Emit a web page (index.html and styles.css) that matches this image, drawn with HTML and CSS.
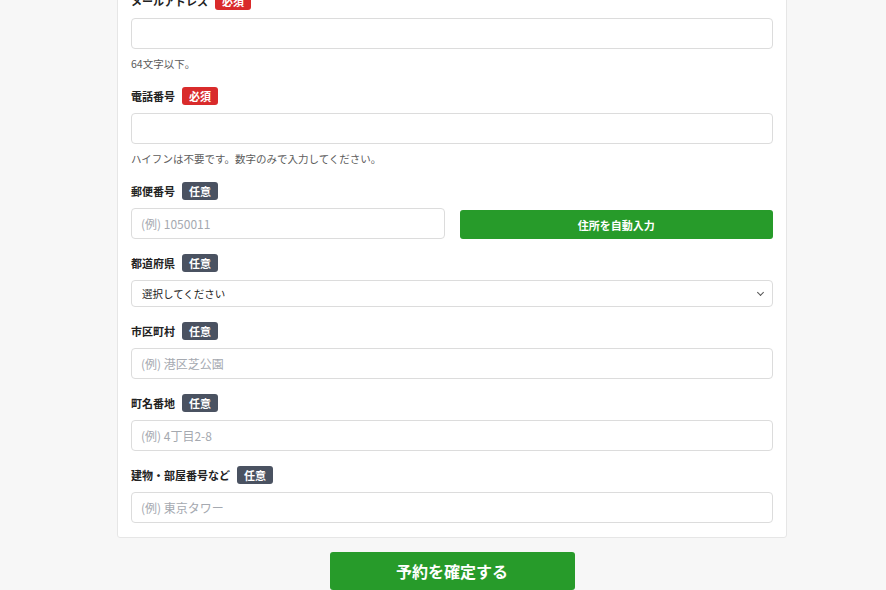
FILE: index.html
```html
<!DOCTYPE html>
<html lang="ja">
<head>
    <meta charset="utf-8">
    <title>予約フォーム</title>
    <link rel="stylesheet" href="styles.css">
</head>
<body>
<div class="page">
    <div class="card">
        <div class="form-group">
            <div class="label-row"><label for="email">メールアドレス</label><span class="badge required">必須</span></div>
            <input type="text" id="email">
            <div class="help">64文字以下。</div>
        </div>

        <div class="form-group">
            <div class="label-row"><label for="tel">電話番号</label><span class="badge required">必須</span></div>
            <input type="text" id="tel">
            <div class="help">ハイフンは不要です。数字のみで入力してください。</div>
        </div>

        <div class="form-group">
            <div class="label-row"><label for="zip">郵便番号</label><span class="badge optional">任意</span></div>
            <div class="zip-row">
                <input type="text" id="zip" placeholder="(例) 1050011">
                <button class="zip-button" type="button">住所を自動入力</button>
            </div>
        </div>

        <div class="form-group">
            <div class="label-row"><label for="pref">都道府県</label><span class="badge optional">任意</span></div>
            <div class="select-wrap">
                <select id="pref">
                    <option>選択してください</option>
                </select>
            </div>
        </div>

        <div class="form-group">
            <div class="label-row"><label for="city">市区町村</label><span class="badge optional">任意</span></div>
            <input type="text" id="city" placeholder="(例) 港区芝公園">
        </div>

        <div class="form-group">
            <div class="label-row"><label for="town">町名番地</label><span class="badge optional">任意</span></div>
            <input type="text" id="town" placeholder="(例) 4丁目2-8">
        </div>

        <div class="form-group">
            <div class="label-row"><label for="building">建物・部屋番号など</label><span class="badge optional">任意</span></div>
            <input type="text" id="building" placeholder="(例) 東京タワー">
        </div>
    </div>

    <div class="submit-area">
        <button class="submit-button" type="submit">予約を確定する</button>
    </div>
</div>
</body>
</html>
```

FILE: styles.css
```css
body {
    margin: 0;
    background-color: #f7f7f7;
    font-family: "Noto Sans CJK JP", "Noto Sans", sans-serif;
    color: #333;
}

.page {
    width: 670px;
    margin: -22px 0 0 117px;
}

.card {
    background-color: white;
    border: 1px solid #e6e6e6;
    border-radius: 3px;
    padding: 13px 13px 14px;
}

.form-group {
    margin-bottom: 15px;
}

.form-group:last-child {
    margin-bottom: 0;
}

.label-row {
    display: flex;
    align-items: center;
    gap: 7px;
    height: 18px;
    margin-bottom: 8px;
}

label {
    font-size: 11px;
    line-height: 18px;
    font-weight: bold;
    color: #222;
}

.badge {
    display: inline-flex;
    align-items: center;
    height: 18px;
    padding: 0 7px;
    border-radius: 3px;
    color: white;
    font-size: 11px;
    font-weight: bold;
}

.badge.required {
    background-color: #d92b2b;
}

.badge.optional {
    background-color: #4a5261;
}

input[type="text"] {
    display: block;
    width: 100%;
    height: 31px;
    padding: 0 9px;
    border: 1px solid #dcdcdc;
    border-radius: 4px;
    font-family: inherit;
    font-size: 12px;
    box-sizing: border-box;
    background-color: white;
}

input::placeholder {
    color: #a5a9b0;
}

.help {
    margin-top: 7px;
    font-size: 10.5px;
    line-height: 16px;
    height: 16px;
    color: #5c5c5c;
}

.zip-row {
    display: grid;
    grid-template-columns: 1fr 1fr;
    gap: 15px;
    align-items: start;
}

.zip-button {
    height: 29px;
    margin-top: 2px;
    background-color: #279b2a;
    border: none;
    border-radius: 3px;
    color: white;
    font-family: inherit;
    font-size: 11px;
    font-weight: bold;
}

.select-wrap {
    position: relative;
}

select {
    display: block;
    width: 100%;
    height: 27px;
    padding: 0 10px;
    border: 1px solid #dcdcdc;
    border-radius: 4px;
    background-color: white;
    font-family: inherit;
    font-size: 10.5px;
    color: #222;
    appearance: none;
}

.select-wrap:after {
    content: '';
    position: absolute;
    right: 10px;
    top: 10px;
    width: 4px;
    height: 4px;
    border-right: 1px solid #555;
    border-bottom: 1px solid #555;
    transform: rotate(45deg);
}

.submit-area {
    display: flex;
    justify-content: center;
    margin-top: 14px;
}

.submit-button {
    width: 245px;
    height: 38px;
    background-color: #279b2a;
    border: none;
    border-radius: 3px;
    color: white;
    font-family: inherit;
    font-size: 16px;
    font-weight: bold;
}
```
